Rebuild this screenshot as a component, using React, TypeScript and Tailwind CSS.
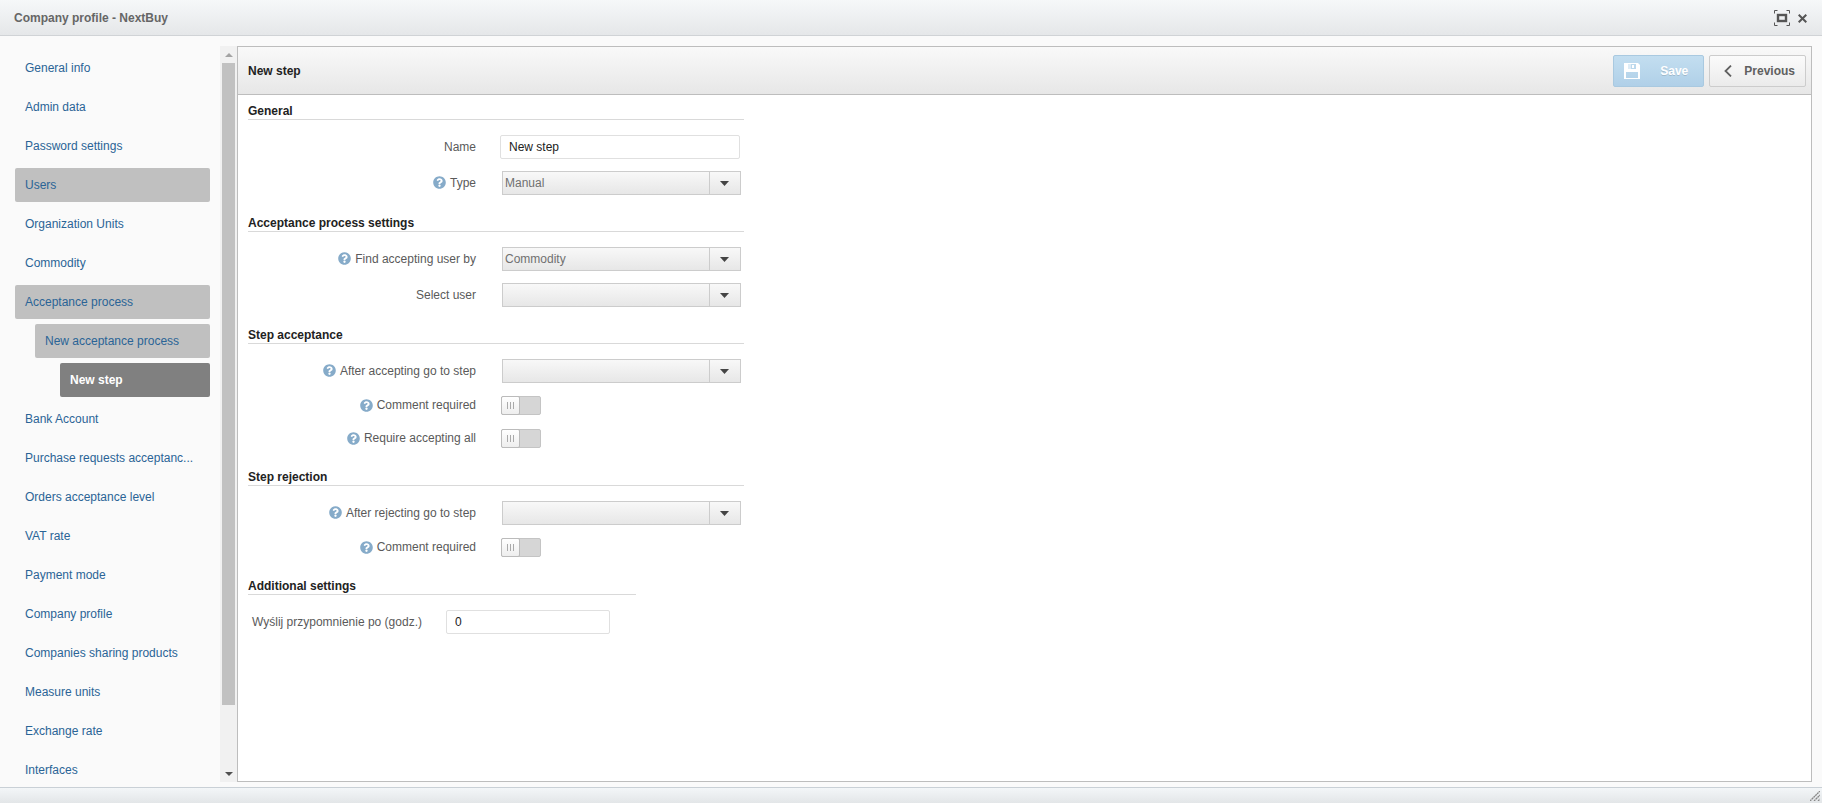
import { useState, type ReactNode } from 'react';
import { FaQuestionCircle } from 'react-icons/fa';
import clsx from 'clsx';

type MenuItem = {
  label: string;
  level?: 1 | 2;
  state?: 'open' | 'current';
};

const MENU: MenuItem[] = [
  { label: 'General info' },
  { label: 'Admin data' },
  { label: 'Password settings' },
  { label: 'Users', state: 'open' },
  { label: 'Organization Units' },
  { label: 'Commodity' },
  { label: 'Acceptance process', state: 'open' },
  { label: 'New acceptance process', level: 1, state: 'open' },
  { label: 'New step', level: 2, state: 'current' },
  { label: 'Bank Account' },
  { label: 'Purchase requests acceptanc...' },
  { label: 'Orders acceptance level' },
  { label: 'VAT rate' },
  { label: 'Payment mode' },
  { label: 'Company profile' },
  { label: 'Companies sharing products' },
  { label: 'Measure units' },
  { label: 'Exchange rate' },
  { label: 'Interfaces' },
];

function TitleBar() {
  return (
    <header className="flex h-9 shrink-0 items-center justify-between border-b border-[#d0d3d6] bg-gradient-to-b from-[#f6f8f9] to-[#e5e7e9] pt-px pr-[15px] pl-3.5">
      <h1 className="font-bold text-[#666]">Company profile - NextBuy</h1>
      <div className="flex items-center gap-2">
        <button aria-label="Maximize" className="text-[#555]">
          <svg width="16" height="16" viewBox="0 0 16 16" fill="none" stroke="currentColor">
            <path d="M.5 3.5v-3h3M12.500 .5h3v3M15.500 12.500v3h-3M3.500 15.500h-3v-3" strokeWidth="1" />
            <rect x="4" y="5" width="8" height="6" strokeWidth="2.400" />
          </svg>
        </button>
        <button aria-label="Close" className="text-[#555]">
          <svg width="9" height="9" viewBox="0 0 9 9" fill="none" stroke="currentColor" strokeWidth="2">
            <path d="M.7.7l7.600 7.600M8.300.7L.7 8.300" />
          </svg>
        </button>
      </div>
    </header>
  );
}

function SideMenu() {
  return (
    <nav className="flex w-[205px] flex-col gap-[5px] overflow-y-auto pt-[5px] [scrollbar-width:none]">
      {MENU.map((item) => (
        <a
          key={item.label}
          href="#"
          aria-current={item.state === 'current' ? 'page' : undefined}
          className={clsx(
            'mr-2.5 flex h-[34px] shrink-0 items-center rounded-xs px-2.5 whitespace-nowrap',
            item.level === 1 && 'ml-5',
            item.level === 2 && 'ml-[45px]',
            item.state === 'current' ? 'bg-[#808080] font-bold text-white' : 'text-[#2a6496]',
            item.state === 'open' && 'bg-[#c0c0c0]',
          )}
        >
          {item.label}
        </a>
      ))}
    </nav>
  );
}

function ScrollBar() {
  return (
    <div aria-hidden="true" className="flex w-[17px] flex-col bg-[#f1f1f1] px-0.5">
      <div className="flex h-[17px] items-center justify-center text-[#a3a3a3]">
        <svg width="8" height="4" viewBox="0 0 8 4" fill="currentColor">
          <path d="M0 4l4-4 4 4z" />
        </svg>
      </div>
      <div className="flex-1">
        <div className="h-[91.5%] bg-[#c1c1c1]" />
      </div>
      <div className="flex h-[17px] items-center justify-center text-[#505050]">
        <svg width="8" height="4" viewBox="0 0 8 4" fill="currentColor">
          <path d="M0 0h8L4 4z" />
        </svg>
      </div>
    </div>
  );
}

function PanelHeader() {
  return (
    <div className="flex h-12 shrink-0 items-center justify-between border-b border-[#bdbdbd] bg-gradient-to-b from-[#f9f9f9] to-[#e7e7e7] pr-[5px] pl-2.5">
      <h2 className="font-bold text-[#222]">New step</h2>
      <div className="flex gap-[5px]">
        <button
          disabled
          className="flex h-8 items-center gap-5 rounded-xs border border-[#a9c9e0] bg-gradient-to-b from-[#c3def0] to-[#b0d0e8] pr-[15px] pl-2.5 font-bold text-white text-shadow-2xs"
        >
          <svg width="16" height="16" viewBox="0 0 16 16" fill="currentColor" fillRule="evenodd">
            <path d="M0 0h14l2 2v14H0zM4 1v5h8V1zM2 9v6h12V9z" />
            <path d="M4 1h3v5H4z" opacity=".5" />
            <path d="M8 2h2v3H8z" />
          </svg>
          Save
        </button>
        <button className="flex h-8 items-center gap-3 rounded-xs border border-[#ccc] bg-gradient-to-b from-[#fbfbfb] to-[#ebebeb] pr-2.5 pl-3.5 font-bold text-[#606060]">
          <svg width="8" height="12" viewBox="0 0 8 12" fill="none" stroke="currentColor" strokeWidth="1.800">
            <path d="M7 .6L1.500 6 7 11.400" />
          </svg>
          Previous
        </button>
      </div>
    </div>
  );
}

function Section({ title, narrow, children }: { title: string; narrow?: boolean; children: ReactNode }) {
  return (
    <section className={clsx('flex flex-col', narrow ? 'w-[388px]' : 'w-[496px]')}>
      <h3 className="mb-[15px] border-b border-[#d9d9d9] font-bold text-[#222]">{title}</h3>
      <div className="flex flex-col gap-3">{children}</div>
    </section>
  );
}

function FieldLabel({ id, help, children }: { id: string; help?: boolean; children: ReactNode }) {
  return (
    <label htmlFor={id} className="flex w-[228px] items-center justify-end gap-1 text-[#5a5a5a]">
      {help && <FaQuestionCircle className="mb-px size-[13px] text-[#86abc9]" />}
      {children}
    </label>
  );
}

function SelectRow({ id, label, value, help }: { id: string; label: string; value: string; help?: boolean }) {
  return (
    <div className="flex items-center gap-[26px]">
      <FieldLabel id={id} help={help}>
        {label}
      </FieldLabel>
      <div className="relative flex-1 pr-[3px]">
        <select
          id={id}
          defaultValue={value}
          className="block h-6 w-full appearance-none border border-[#ccc] bg-gradient-to-b from-[#f8f8f8] to-[#e7e7e7] pr-8 pl-0.5 text-[#707070]"
        >
          <option value={value}>{value}</option>
        </select>
        <span className="pointer-events-none absolute inset-y-px right-1 flex w-[31px] items-center justify-center border-l border-[#ccc] pr-0.5 text-[#444]">
          <svg width="9" height="5" viewBox="0 0 9 5" fill="currentColor">
            <path d="M0 0h9L4.500 5z" />
          </svg>
        </span>
      </div>
    </div>
  );
}

function ToggleRow({ id, label }: { id: string; label: string }) {
  const [on, setOn] = useState(false);

  return (
    <div className="flex h-[21px] items-center gap-[25px]">
      <FieldLabel id={id} help>
        {label}
      </FieldLabel>
      <div className="relative h-[19px] w-10">
        <input
          id={id}
          type="checkbox"
          role="switch"
          checked={on}
          onChange={(e) => setOn(e.target.checked)}
          className="block h-full w-full appearance-none rounded-xs border border-[#c4c4c4] bg-[#d6d6d6] checked:bg-[#abcde6]"
        />
        <span
          className={clsx(
            'pointer-events-none absolute inset-y-0 flex w-[19px] items-center justify-center gap-0.5 rounded-xs border border-[#bbb] bg-gradient-to-b from-white to-[#eee]',
            on ? 'right-0' : 'left-0',
          )}
        >
          <i className="h-[7px] w-px bg-[#aaa]" />
          <i className="h-[7px] w-px bg-[#aaa]" />
          <i className="h-[7px] w-px bg-[#aaa]" />
        </span>
      </div>
    </div>
  );
}

function StepForm() {
  return (
    <form className="flex flex-1 flex-col gap-[21px] px-2.5 pt-[9px] leading-[15px]">
      <Section title="General">
        <div className="flex items-center gap-6">
          <FieldLabel id="name">Name</FieldLabel>
          <input
            id="name"
            defaultValue="New step"
            className="mr-1 h-6 min-w-0 flex-1 rounded-xs border border-[#e0e0e0] bg-white px-2 text-[#222]"
          />
        </div>
        <SelectRow id="type" label="Type" value="Manual" help />
      </Section>

      <Section title="Acceptance process settings">
        <SelectRow id="find-by" label="Find accepting user by" value="Commodity" help />
        <SelectRow id="user" label="Select user" value="" />
      </Section>

      <Section title="Step acceptance">
        <SelectRow id="accept-step" label="After accepting go to step" value="" help />
        <ToggleRow id="accept-comment" label="Comment required" />
        <ToggleRow id="accept-all" label="Require accepting all" />
      </Section>

      <Section title="Step rejection">
        <SelectRow id="reject-step" label="After rejecting go to step" value="" help />
        <ToggleRow id="reject-comment" label="Comment required" />
      </Section>

      <Section title="Additional settings" narrow>
        <div className="flex items-center gap-6 pl-1">
          <label htmlFor="reminder" className="w-[170px] text-[#5a5a5a]">
            Wyślij przypomnienie po (godz.)
          </label>
          <input
            id="reminder"
            defaultValue="0"
            className="h-6 w-[164px] rounded-xs border border-[#e0e0e0] bg-white px-2 text-[#222]"
          />
        </div>
      </Section>
    </form>
  );
}

export default function App() {
  return (
    <div className="flex h-screen flex-col bg-[#fafafa] font-['Liberation_Sans',Arial,sans-serif] text-xs">
      <TitleBar />
      <div className="flex min-h-0 flex-1 pt-2.5 pr-2.5 pb-[5px] pl-[15px]">
        <SideMenu />
        <ScrollBar />
        <main className="flex min-w-0 flex-1 flex-col border border-[#bdbdbd] bg-white">
          <PanelHeader />
          <StepForm />
        </main>
      </div>
      <footer className="flex h-4 shrink-0 items-end justify-end border-t border-[#c9d0d6] bg-gradient-to-b from-[#f3f6f8] to-[#e3e6e8] pr-0.5 pb-0.5">
        <svg width="10" height="10" viewBox="0 0 10 10" fill="none" stroke="#888" strokeWidth="1.300">
          <path d="M0 10L10 0M4 10l6-6M8 10l2-2" strokeDasharray="2 .5" />
        </svg>
      </footer>
    </div>
  );
}
